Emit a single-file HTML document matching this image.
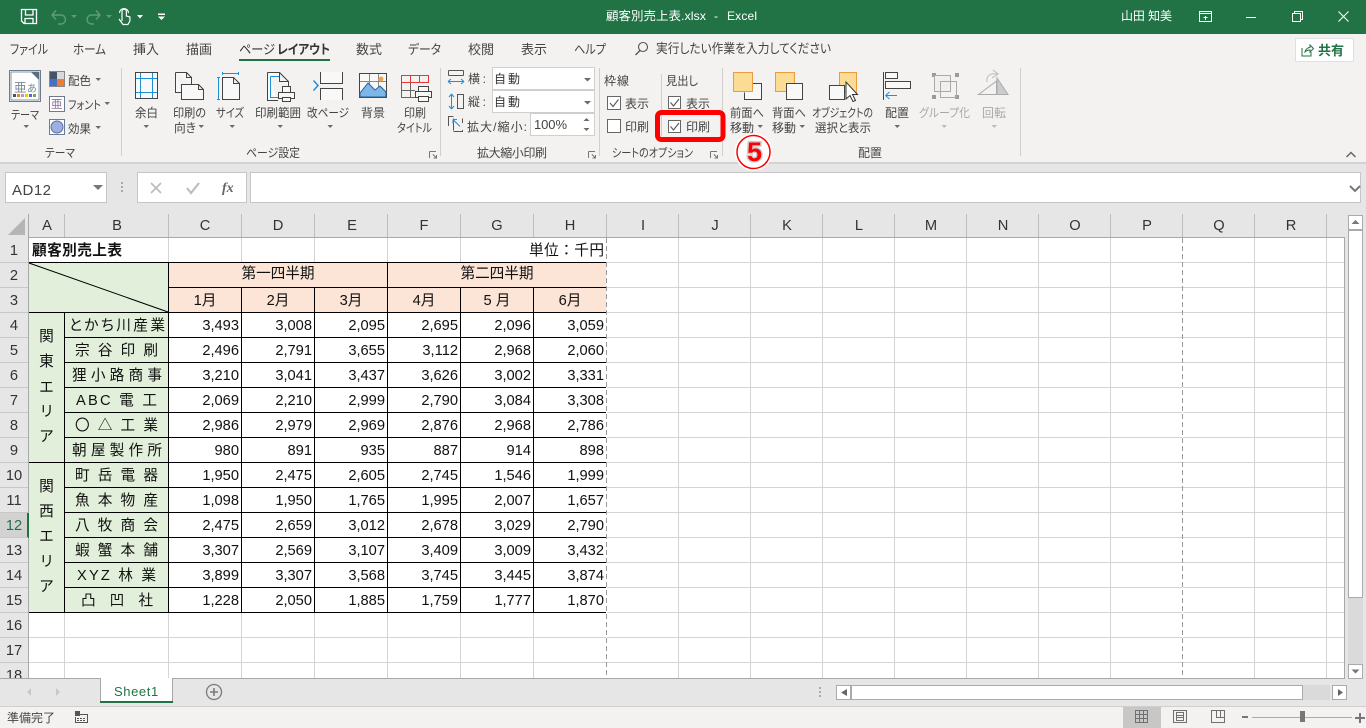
<!DOCTYPE html>
<html lang="ja"><head><meta charset="utf-8"><title>顧客別売上表.xlsx - Excel</title>
<style>
html,body{margin:0;padding:0;width:1366px;height:728px;overflow:hidden;background:#fff}
svg{display:block}
text{font-family:"Liberation Sans","Noto Sans CJK JP",sans-serif;font-feature-settings:"palt";white-space:pre}
.r{font-size:12px;fill:#444}
.t{font-size:13px;fill:#444}
.w{font-size:12px;fill:#fff}
.m{text-anchor:middle}
.e{text-anchor:end}
.h{font-size:14.67px;fill:#333;text-anchor:middle}
.c{font-size:14.67px;fill:#111}
.n{font-size:14.67px;fill:#111;text-anchor:end}
.d{fill:#6a6a6a}
.g{font-size:12px;fill:#a8a8a8}
</style></head><body>
<svg width="1366" height="728" viewBox="0 0 1366 728" xmlns="http://www.w3.org/2000/svg">
<rect width="1366" height="728" fill="#e6e6e6"/>

<!-- sheet -->
<rect x="29" y="238" width="1315" height="440" fill="#fff"/>
<g shape-rendering="crispEdges">
<rect x="29" y="263" width="139" height="49" fill="#e2efda"/>
<rect x="169" y="263" width="437" height="49" fill="#fce4d6"/>
<rect x="29" y="313" width="139" height="299" fill="#e2efda"/>
<path d="M29 262.5H1344M29 287.5H1344M29 312.5H1344M29 337.5H1344M29 362.5H1344M29 387.5H1344M29 412.5H1344M29 437.5H1344M29 462.5H1344M29 487.5H1344M29 512.5H1344M29 537.5H1344M29 562.5H1344M29 587.5H1344M29 612.5H1344M29 637.5H1344M29 662.5H1344" stroke="#d4d4d4"/>
<path d="M64.5 262V312M64.5 613V678M168.5 238V678M241.5 238V678M314.5 238V678M387.5 238V678M460.5 238V678M533.5 262V678M678.5 238V678M750.5 238V678M822.5 238V678M894.5 238V678M966.5 238V678M1038.5 238V678M1110.5 238V678M1254.5 238V678M1326.5 238V678" stroke="#d4d4d4"/>
<rect x="606" y="238" width="1" height="440" fill="#fff"/>
<rect x="1182" y="238" width="1" height="440" fill="#fff"/>
<path d="M606.5 238V678M1182.5 238V678" stroke="#9a9a9a" stroke-dasharray="5 3"/>
<rect x="29" y="263" width="139" height="49" fill="#e2efda"/>
<rect x="169" y="263" width="437" height="24" fill="#fce4d6"/>
<rect x="169" y="288" width="437" height="24" fill="#fce4d6"/>
<rect x="29" y="313" width="35" height="299" fill="#e2efda"/>
<rect x="65" y="313" width="103" height="299" fill="#e2efda"/>
<rect x="169" y="313" width="437" height="299" fill="#fff"/>
<path d="M28 262.5H606M168 287.5H606M28 312.5H606M64 337.5H606M64 362.5H606M64 387.5H606M64 412.5H606M64 437.5H606M28 462.5H606M64 487.5H606M64 512.5H606M64 537.5H606M64 562.5H606M64 587.5H606M28 612.5H606" stroke="#000"/>
<path d="M64.5 312V612M168.5 262V612M241.5 287V612M314.5 287V612M387.5 262V612M460.5 287V612M533.5 287V612" stroke="#000"/>
</g>
<path d="M29 263L168 312" stroke="#000" fill="none"/>

<!-- sheet text -->
<text x="32" y="255" class="c" style="font-weight:700" textLength="90">顧客別売上表</text>
<text x="529" y="255" class="c" style="font-size:14.67px;font-feature-settings:normal" textLength="75">単位：千円</text>
<text x="278" y="278" class="c m" textLength="73">第一四半期</text>
<text x="497" y="278" class="c m" textLength="73">第二四半期</text>
<text x="205" y="305" class="c m">1月</text><text x="278" y="305" class="c m">2月</text><text x="351" y="305" class="c m">3月</text>
<text x="424" y="305" class="c m">4月</text><text x="497" y="305" class="c m">5 月</text><text x="570" y="305" class="c m">6月</text>

<g class="c">
<text x="46.5" y="341" class="c m">関</text><text x="46.5" y="366" class="c m">東</text><text x="46.5" y="392" class="c m">エ</text><text x="46.5" y="416" class="c m">リ</text><text x="46.5" y="441" class="c m">ア</text>
<text x="46.5" y="491" class="c m">関</text><text x="46.5" y="516" class="c m">西</text><text x="46.5" y="541" class="c m">エ</text><text x="46.5" y="566" class="c m">リ</text><text x="46.5" y="591" class="c m">ア</text>
<text x="69" y="330" class="c" textLength="96">とかち川産業</text>
<text x="75" y="355" class="c" textLength="83">宗谷印刷</text>
<text x="72" y="380" class="c" textLength="90">狸小路商事</text>
<text x="76" y="405" class="c" textLength="81">ABC 電 工</text>
<text x="75" y="430" class="c" textLength="83">〇△工業</text>
<text x="72" y="455" class="c" textLength="90">朝屋製作所</text>
<text x="75" y="480" class="c" textLength="83">町岳電器</text>
<text x="75" y="505" class="c" textLength="83">魚本物産</text>
<text x="75" y="530" class="c" textLength="83">八牧商会</text>
<text x="75" y="555" class="c" textLength="83">蝦蟹本舗</text>
<text x="77" y="580" class="c" textLength="79">XYZ 林 業</text>
<text x="81" y="605" class="c" textLength="72">凸凹社</text>
</g>

<text class="n" x="239" y="330">3,493</text><text class="n" x="312" y="330">3,008</text><text class="n" x="385" y="330">2,095</text><text class="n" x="458" y="330">2,695</text><text class="n" x="531" y="330">2,096</text><text class="n" x="604" y="330">3,059</text>
<text class="n" x="239" y="355">2,496</text><text class="n" x="312" y="355">2,791</text><text class="n" x="385" y="355">3,655</text><text class="n" x="458" y="355">3,112</text><text class="n" x="531" y="355">2,968</text><text class="n" x="604" y="355">2,060</text>
<text class="n" x="239" y="380">3,210</text><text class="n" x="312" y="380">3,041</text><text class="n" x="385" y="380">3,437</text><text class="n" x="458" y="380">3,626</text><text class="n" x="531" y="380">3,002</text><text class="n" x="604" y="380">3,331</text>
<text class="n" x="239" y="405">2,069</text><text class="n" x="312" y="405">2,210</text><text class="n" x="385" y="405">2,999</text><text class="n" x="458" y="405">2,790</text><text class="n" x="531" y="405">3,084</text><text class="n" x="604" y="405">3,308</text>
<text class="n" x="239" y="430">2,986</text><text class="n" x="312" y="430">2,979</text><text class="n" x="385" y="430">2,969</text><text class="n" x="458" y="430">2,876</text><text class="n" x="531" y="430">2,968</text><text class="n" x="604" y="430">2,786</text>
<text class="n" x="239" y="455">980</text><text class="n" x="312" y="455">891</text><text class="n" x="385" y="455">935</text><text class="n" x="458" y="455">887</text><text class="n" x="531" y="455">914</text><text class="n" x="604" y="455">898</text>
<text class="n" x="239" y="480">1,950</text><text class="n" x="312" y="480">2,475</text><text class="n" x="385" y="480">2,605</text><text class="n" x="458" y="480">2,745</text><text class="n" x="531" y="480">1,546</text><text class="n" x="604" y="480">1,999</text>
<text class="n" x="239" y="505">1,098</text><text class="n" x="312" y="505">1,950</text><text class="n" x="385" y="505">1,765</text><text class="n" x="458" y="505">1,995</text><text class="n" x="531" y="505">2,007</text><text class="n" x="604" y="505">1,657</text>
<text class="n" x="239" y="530">2,475</text><text class="n" x="312" y="530">2,659</text><text class="n" x="385" y="530">3,012</text><text class="n" x="458" y="530">2,678</text><text class="n" x="531" y="530">3,029</text><text class="n" x="604" y="530">2,790</text>
<text class="n" x="239" y="555">3,307</text><text class="n" x="312" y="555">2,569</text><text class="n" x="385" y="555">3,107</text><text class="n" x="458" y="555">3,409</text><text class="n" x="531" y="555">3,009</text><text class="n" x="604" y="555">3,432</text>
<text class="n" x="239" y="580">3,899</text><text class="n" x="312" y="580">3,307</text><text class="n" x="385" y="580">3,568</text><text class="n" x="458" y="580">3,745</text><text class="n" x="531" y="580">3,445</text><text class="n" x="604" y="580">3,874</text>
<text class="n" x="239" y="605">1,228</text><text class="n" x="312" y="605">2,050</text><text class="n" x="385" y="605">1,885</text><text class="n" x="458" y="605">1,759</text><text class="n" x="531" y="605">1,777</text><text class="n" x="604" y="605">1,870</text>

<!-- headers -->
<g shape-rendering="crispEdges">
<rect x="0" y="513" width="28" height="25" fill="#d2d2d2"/>
<rect x="27" y="513" width="2" height="25" fill="#217346"/>
<path d="M0 262.5H28M0 287.5H28M0 312.5H28M0 337.5H28M0 362.5H28M0 387.5H28M0 412.5H28M0 437.5H28M0 462.5H28M0 487.5H28M0 512.5H28M0 537.5H28M0 562.5H28M0 587.5H28M0 612.5H28M0 637.5H28M0 662.5H28" stroke="#c8c8c8"/>
<path d="M28.5 214V513M28.5 538V678" stroke="#a8a8a8"/>
<path d="M28 237.5H1344.5V678M28 678.5H1345" stroke="#a8a8a8" fill="none"/>
<path d="M64.5 214V237M168.5 214V237M241.5 214V237M314.5 214V237M387.5 214V237M460.5 214V237M533.5 214V237M606.5 214V237M678.5 214V237M750.5 214V237M822.5 214V237M894.5 214V237M966.5 214V237M1038.5 214V237M1110.5 214V237M1182.5 214V237M1254.5 214V237M1326.5 214V237" stroke="#bdbdbd"/>
</g>
<path d="M25 218V235H8Z" fill="#b5b5b5"/>
<text class="h" x="47" y="230">A</text><text class="h" x="117" y="230">B</text><text class="h" x="205" y="230">C</text><text class="h" x="278" y="230">D</text><text class="h" x="352" y="230">E</text><text class="h" x="424" y="230">F</text><text class="h" x="497" y="230">G</text><text class="h" x="570" y="230">H</text><text class="h" x="643" y="230">I</text><text class="h" x="715" y="230">J</text><text class="h" x="787" y="230">K</text><text class="h" x="859" y="230">L</text><text class="h" x="931" y="230">M</text><text class="h" x="1003" y="230">N</text><text class="h" x="1075" y="230">O</text><text class="h" x="1147" y="230">P</text><text class="h" x="1219" y="230">Q</text><text class="h" x="1291" y="230">R</text>
<text class="h" x="14" y="255">1</text><text class="h" x="14" y="280">2</text><text class="h" x="14" y="305">3</text><text class="h" x="14" y="330">4</text><text class="h" x="14" y="355">5</text><text class="h" x="14" y="380">6</text><text class="h" x="14" y="405">7</text><text class="h" x="14" y="430">8</text><text class="h" x="14" y="455">9</text><text class="h" x="14" y="480">10</text><text class="h" x="14" y="505">11</text><text class="h" x="14" y="530" style="fill:#217346">12</text><text class="h" x="14" y="555">13</text><text class="h" x="14" y="580">14</text><text class="h" x="14" y="605">15</text><text class="h" x="14" y="630">16</text><text class="h" x="14" y="655">17</text><text class="h" x="14" y="680">18</text>

<!-- bottom bars -->
<g shape-rendering="crispEdges">
<rect x="0" y="678" width="1366" height="29" fill="#e6e6e6"/>
<path d="M0 678.5H100M172 678.5H1345" stroke="#a8a8a8"/>
<rect x="0" y="706" width="1366" height="1" fill="#cfcfcf"/>
<rect x="0" y="707" width="1366" height="21" fill="#f3f2f1"/>
<rect x="100" y="678" width="73" height="25" fill="#fff"/>
<path d="M100.5 678V703M172.5 678V703" stroke="#a8a8a8"/>
<rect x="100" y="701" width="73" height="2" fill="#217346"/>
</g>
<path d="M31 688L27 692L31 696Z" fill="#c8c8c8"/><path d="M56 688L60 692L56 696Z" fill="#c8c8c8"/>
<text x="114" y="696" style="font-size:13px;fill:#217346;letter-spacing:.6px">Sheet1</text>
<circle cx="214" cy="692" r="7.5" fill="none" stroke="#7a7a7a" stroke-width="1.3"/><path d="M210 692H218M214 688V696" stroke="#7a7a7a" stroke-width="1.6"/>
<g fill="#aaa"><rect x="819" y="687" width="2" height="2"/><rect x="819" y="691" width="2" height="2"/><rect x="819" y="695" width="2" height="2"/></g>
<g shape-rendering="crispEdges">
<rect x="851" y="685" width="479" height="15" fill="#dadada"/>
<rect x="836.5" y="685.5" width="14" height="14" fill="#fff" stroke="#aaa"/>
<rect x="851.5" y="685.5" width="451" height="14" fill="#fff" stroke="#aaa"/>
<rect x="1332.5" y="685.5" width="14" height="14" fill="#fff" stroke="#aaa"/>
<rect x="1348" y="230" width="15" height="434" fill="#dadada"/>
<rect x="1348.5" y="215.5" width="14" height="14" fill="#fff" stroke="#aaa"/>
<rect x="1348.5" y="230.5" width="14" height="367" fill="#fff" stroke="#aaa"/>
<rect x="1348.5" y="664.5" width="14" height="14" fill="#fff" stroke="#aaa"/>
</g>
<path d="M847 689L841 692.5L847 696Z" fill="#666"/><path d="M1338 689L1343 692.5L1338 696Z" fill="#666"/>
<path d="M1355.5 220L1359.5 224H1351.5Z" fill="#777"/><path d="M1351.5 669.5H1359.5L1355.5 673.5Z" fill="#777"/>

<text x="7" y="722" class="r" textLength="48">準備完了</text>
<g fill="#555" shape-rendering="crispEdges"><rect x="75" y="711" width="5" height="5"/><path d="M80 714h8v9h-13v-6h1v5h11v-7h-7z"/><path d="M77 718h2v1h-2zM80 718h2v1h-2zM83 718h2v1h-2zM77 720h2v1h-2zM80 720h2v1h-2zM83 720h2v1h-2z"/></g>
<g shape-rendering="crispEdges" fill="none" stroke="#707070">
<rect x="1123" y="707" width="38" height="21" fill="#c8c7c6" stroke="none"/>
<path d="M1135.5 710.5h12v12h-12zM1139.5 710.5v12M1143.5 710.5v12M1135.5 714.5h12M1135.5 718.5h12"/>
<path d="M1173.5 710.5h13v12h-13zM1176.5 712.5h7v8h-7zM1177 715.5h6M1177 717.5h6"/>
<path d="M1211.5 710.5h13v12h-13zM1216.5 710.5v7h8M1220.5 710.5v7"/>
</g>
<g shape-rendering="crispEdges">
<rect x="1242" y="716" width="6" height="2" fill="#777"/>
<rect x="1252" y="717" width="100" height="1" fill="#aaa"/>
<rect x="1300" y="711" width="5" height="11" fill="#777"/>
<path d="M1355 717h4v-4h2v4h4v2h-4v4h-2v-4h-4z" fill="#777"/>
</g>

<!-- formula bar -->
<rect x="0" y="162" width="1366" height="52" fill="#e6e6e6"/>
<rect x="0" y="162" width="1366" height="2" fill="#d2d2d2"/>
<g shape-rendering="crispEdges" stroke="#c6c6c6" fill="#fff">
<rect x="5.5" y="172.5" width="101" height="30"/>
<rect x="137.5" y="172.5" width="109" height="30"/>
<rect x="250.5" y="172.5" width="1110" height="30"/>
</g>
<text x="12" y="195" style="font-size:15px;fill:#444;letter-spacing:.5px">AD12</text>
<path d="M93 185H103L98 190Z" fill="#777"/>
<g fill="#aaa"><rect x="121" y="182" width="2" height="2"/><rect x="121" y="186" width="2" height="2"/><rect x="121" y="190" width="2" height="2"/></g>
<path d="M151 183L161 193M161 183L151 193" stroke="#bdbdbd" stroke-width="1.8" fill="none"/>
<path d="M187 188L191 193L199 183" stroke="#bdbdbd" stroke-width="2.2" fill="none"/>
<text x="222" y="192" style="font-family:'Liberation Serif',serif;font-style:italic;font-weight:700;font-size:14px;fill:#666">fx</text>
<path d="M1350 186L1355 191L1360 186" stroke="#777" stroke-width="2" fill="none"/>

<!-- ribbon -->
<rect x="0" y="34" width="1366" height="128" fill="#f3f2f1"/>
<rect x="0" y="0" width="1366" height="34" fill="#217346"/>

<!-- QAT -->
<g fill="none" stroke="#fff" stroke-width="1.3">
<path d="M21.5 9.5H36.5V23.5H24L21.5 21Z"/><path d="M25.5 9.5V15H33V9.5M25 23.5V18.5H33V23.5"/>
<path d="M122 21V11.5a2.2 2.2 0 0 1 4.4 0V16l3.5 1V21l-2 3.5H123L119 19" stroke-width="1.2"/><path d="M119.5 13a4.5 4.5 0 0 1 9 0" stroke-width="1.1"/>
</g>
<g fill="none" stroke="#5f9a7c" stroke-width="1.4">
<path d="M56 10.500L52 15L56 19.500M52.500 15H61a4.500 4.500 0 0 1 0 9H58"/>
<path d="M96 10.500L100 15L96 19.500M99.500 15H91.500a4.500 4.500 0 0 0 0 9H94"/>
</g>
<path d="M71 15H77L74 18Z" fill="#5f9a7c"/><path d="M106 15H112L109 18Z" fill="#5f9a7c"/>
<path d="M137 15H143L140 18.500Z" fill="#fff"/>
<path d="M158 13.500H165V15H158ZM158 16.500H165L161.500 20Z" fill="#fff"/>

<!-- title -->
<text x="606" y="20" class="w" textLength="100" lengthAdjust="spacingAndGlyphs">顧客別売上表.xlsx</text>
<text x="714" y="20" class="w">-</text>
<text x="727" y="20" class="w" textLength="30">Excel</text>
<text x="1121" y="20" class="w" textLength="51">山田 知美</text>
<g fill="none" stroke="#fff" stroke-width="1" shape-rendering="crispEdges">
<path d="M1199.500 11.500H1211.500V21.500H1199.500ZM1199.500 13.500H1211.500"/>
<path d="M1205.500 20V16M1203.500 17.500H1207.500"/>
<path d="M1292 17.500H1302" style="display:none"/>
<path d="M1246 17.500H1256"/>
<path d="M1292.500 13.500H1300.500V21.500H1292.500ZM1294.500 13.500V11.500H1302.500V19.500H1300.500"/>
</g>
<path d="M1338.500 11.500L1348.500 21.500M1348.500 11.500L1338.500 21.500" stroke="#fff" stroke-width="1.1"/>

<!-- tabs -->
<text x="10" y="54" class="t" textLength="38" lengthAdjust="spacingAndGlyphs">ファイル</text>
<text x="73" y="54" class="t" textLength="33" lengthAdjust="spacingAndGlyphs">ホーム</text>
<text x="133" y="54" class="t" textLength="26" lengthAdjust="spacingAndGlyphs">挿入</text>
<text x="186" y="54" class="t" textLength="26" lengthAdjust="spacingAndGlyphs">描画</text>
<text x="239" y="54" class="t" style="fill:#333" textLength="36" lengthAdjust="spacingAndGlyphs">ページ</text>
<text x="277" y="54" class="t" style="font-weight:700;fill:#333" textLength="53" lengthAdjust="spacingAndGlyphs">レイアウト</text>
<rect x="239" y="59" width="91" height="2" fill="#217346"/>
<text x="356" y="54" class="t" textLength="26" lengthAdjust="spacingAndGlyphs">数式</text>
<text x="408" y="54" class="t" textLength="33" lengthAdjust="spacingAndGlyphs">データ</text>
<text x="468" y="54" class="t" textLength="26" lengthAdjust="spacingAndGlyphs">校閲</text>
<text x="521" y="54" class="t" textLength="26" lengthAdjust="spacingAndGlyphs">表示</text>
<text x="574" y="54" class="t" textLength="32" lengthAdjust="spacingAndGlyphs">ヘルプ</text>
<circle cx="643" cy="47" r="4.500" fill="none" stroke="#555" stroke-width="1.1"/><path d="M640 50.500L635.500 55" stroke="#555" stroke-width="1.3"/>
<text x="656" y="53" class="t" textLength="175" lengthAdjust="spacingAndGlyphs">実行したい作業を入力してください</text>
<rect x="1295.500" y="38.500" width="58" height="23" fill="#fff" stroke="#e0e0e0" rx="1"/>
<path d="M1302 48V56H1311V52M1305 52c.500-3 3-4.500 5-4.500V45l3.500 3.500L1310 52V50c-2 0-3.500.500-5 2z" fill="none" stroke="#217346"/>
<text x="1318" y="55" style="font-size:13px;font-weight:700;fill:#217346">共有</text>

<!-- separators -->
<g fill="#d0cfce" shape-rendering="crispEdges">
<rect x="121" y="68" width="1" height="88"/><rect x="440" y="68" width="1" height="88"/><rect x="599" y="68" width="1" height="88"/><rect x="661" y="74" width="1" height="62"/><rect x="722" y="68" width="1" height="88"/><rect x="1020" y="68" width="1" height="88"/>
</g>

<!-- theme group -->
<rect x="9.500" y="70.500" width="31" height="31" fill="#fff" stroke="#6d7b8f"/>
<rect x="11" y="72" width="28" height="28" fill="none" stroke="#6d7b8f" stroke-width=".8"/>
<path d="M31 72H39V80Z" fill="#5b6b80"/>
<text x="14" y="92" style="font-size:12.500px;fill:#7b8794">亜</text><text x="27" y="92" style="font-size:10px;fill:#7b8794">あ</text>
<g shape-rendering="crispEdges"><rect x="13" y="94" width="3" height="3" fill="#44546a"/><rect x="17" y="94" width="3" height="3" fill="#ed7d31"/><rect x="21" y="94" width="3" height="3" fill="#a5a5a5"/><rect x="25" y="94" width="3" height="3" fill="#ffc000"/><rect x="29" y="94" width="3" height="3" fill="#4472c4"/><rect x="33" y="94" width="3" height="3" fill="#70ad47"/></g>
<text x="11" y="119" class="r" textLength="28" lengthAdjust="spacingAndGlyphs">テーマ</text><path d="M23.500 125H29L26.200 128Z" class="d"/>
<g shape-rendering="crispEdges">
<rect x="49" y="71" width="16" height="16" fill="#888"/><rect x="50" y="72" width="7" height="7" fill="#44546a"/><rect x="57" y="72" width="7" height="7" fill="#d9d9d9"/><rect x="50" y="79" width="7" height="7" fill="#4472c4"/><rect x="57" y="79" width="7" height="7" fill="#ed7d31"/>
<rect x="49.500" y="96.500" width="15" height="15" fill="#fff" stroke="#6d7b8f"/>
<rect x="49.500" y="119.500" width="15" height="15" fill="#fff" stroke="#6d7b8f"/>
</g>
<text x="51" y="108" style="font-size:11.500px;fill:#8a6f9a">亜</text>
<circle cx="57" cy="127" r="6" fill="#9db0dd" stroke="#4f6fb8"/>
<text x="68" y="85" class="r" textLength="23" lengthAdjust="spacingAndGlyphs">配色</text><path d="M95.500 78H101L98.200 81Z" class="d"/>
<text x="68" y="109" class="r" textLength="33" lengthAdjust="spacingAndGlyphs">フォント</text><path d="M104.500 102H110L107.200 105Z" class="d"/>
<text x="68" y="133" class="r" textLength="23" lengthAdjust="spacingAndGlyphs">効果</text><path d="M95.500 126H101L98.200 129Z" class="d"/>
<text x="45" y="157" class="r" textLength="30" lengthAdjust="spacingAndGlyphs">テーマ</text>

<!-- page setup -->
<g fill="none" stroke="#444" shape-rendering="crispEdges">
<rect x="135.500" y="72.500" width="22" height="26" fill="#f8f8f8"/>
<path d="M140.500 73V98M152.500 73V98M136 78.500H157M136 92.500H157" stroke="#1f8fd6"/>
<path d="M175.500 72.500H186.500L191.500 77.500V84M186.500 72.500V77.500H191.500M175.500 72.500V92.500H181" fill="#f8f8f8"/>
<path d="M181.500 84.500H198.500L203.500 89.500V99.500H181.500ZM198.500 84.500V89.500H203.500" fill="#f8f8f8"/>
<path d="M222.500 77.500H233.500L239.500 83.500V99.500H222.500ZM233.500 77.500V83.500H239.500" fill="#f8f8f8"/>
<path d="M222 73.500H239M222.500 72V75M238.500 72V75M218.500 78V99M217 77.500H220M217 99.500H220" stroke="#1f8fd6"/>
<path d="M267.500 72.500H279.500L288.500 81.500V86M279.500 72.500V81.500H288.500M267.500 72.500V100.500H278" fill="#f8f8f8"/>
<path d="M270.500 76.500H279M270.500 76.500V97.500H278" stroke="#1f8fd6"/>
<rect x="282.500" y="86.500" width="8" height="6" fill="#f8f8f8"/><rect x="278.500" y="92.500" width="16" height="6" fill="#f8f8f8"/><rect x="282.500" y="97.500" width="8" height="4" fill="#f8f8f8"/>
<path d="M320.500 72V83.500H342.500V72M320.500 100V88.500H342.500V100" fill="#f8f8f8"/>
<path d="M313.500 80.500L318 85.500L313.500 90.500" stroke="#1f8fd6" stroke-width="1.500" shape-rendering="auto"/>
<rect x="359.500" y="73.500" width="27" height="24" fill="#f8f8f8"/>
<path d="M369.500 74V90M378.500 74V90M360 81.500H386" stroke="#888"/>
</g>
<path d="M360 93L368 83L375 90L380 86L386 92V97H360Z" fill="#7db6e8" stroke="#2c5f8e"/>
<circle cx="381" cy="79" r="2.500" fill="#f2a54a"/>
<g fill="none" shape-rendering="crispEdges">
<path d="M401.500 75.500H428.500V82.500H401.500ZM410.500 75.500V82.500M419.500 75.500V82.500" stroke="#e33"/>
<path d="M401.500 82.500V97.500H415M401.500 90.500H415M410.500 83V97" stroke="#666"/>
<rect x="418.500" y="86.500" width="10" height="5" fill="#f8f8f8" stroke="#444"/><rect x="415.500" y="91.500" width="16" height="6" fill="#f8f8f8" stroke="#444"/><rect x="418.500" y="96.500" width="10" height="5" fill="#f8f8f8" stroke="#444"/>
</g>
<text x="135" y="117" class="r" textLength="23" lengthAdjust="spacingAndGlyphs">余白</text><path d="M143.500 125H149L146.200 128Z" class="d"/>
<text x="173" y="117" class="r" textLength="33" lengthAdjust="spacingAndGlyphs">印刷の</text><text x="174" y="132" class="r" textLength="22" lengthAdjust="spacingAndGlyphs">向き</text><path d="M198.500 125H204L201.200 128Z" class="d"/>
<text x="216" y="117" class="r" textLength="28" lengthAdjust="spacingAndGlyphs">サイズ</text><path d="M229.500 125H235L232.200 128Z" class="d"/>
<text x="255" y="117" class="r" textLength="46" lengthAdjust="spacingAndGlyphs">印刷範囲</text><path d="M277.500 125H283L280.200 128Z" class="d"/>
<text x="307" y="117" class="r" textLength="42" lengthAdjust="spacingAndGlyphs">改ページ</text><path d="M327.500 125H333L330.200 128Z" class="d"/>
<text x="361" y="117" class="r" textLength="24" lengthAdjust="spacingAndGlyphs">背景</text>
<text x="404" y="117" class="r" textLength="22" lengthAdjust="spacingAndGlyphs">印刷</text><text x="397" y="132" class="r" textLength="35" lengthAdjust="spacingAndGlyphs">タイトル</text>
<text x="246" y="157" class="r" textLength="54" lengthAdjust="spacingAndGlyphs">ページ設定</text>
<path d="M429.500 151.500H436M429.500 151.500V158M433 154.500L436.500 158M433.500 158H436.500V155" stroke="#777" fill="none" shape-rendering="crispEdges"/>

<!-- scale group -->
<g fill="none" shape-rendering="crispEdges">
<path d="M448.500 70.500H463.500M448.500 70.500V75.500M463.500 70.500V75.500M448.500 75.500H463.500" stroke="#555"/>
<path d="M448 81.500H464M448 81.500L451 79M448 81.500L451 84M464 81.500L461 79M464 81.500L461 84" stroke="#1f8fd6" shape-rendering="auto"/>
<path d="M457.500 94.500H463.500V108.500H457.500Z" stroke="#555"/>
<path d="M451.500 94V109M451.500 94L449 97M451.500 94L454 97M451.500 109L449 106M451.500 109L454 106" stroke="#1f8fd6" shape-rendering="auto"/>
<path d="M453.500 116.500H448.500V126" stroke="#555"/>
<path d="M453.500 118.500V130.500M462.500 118.500V123M462.500 130V131.500H453.500" stroke="#555"/>
<path d="M453 119.500L460 126.500M453 119.500H457M453 119.500V123.500" stroke="#1f8fd6" shape-rendering="auto"/>
<rect x="492.500" y="67.500" width="102" height="22" fill="#fff" stroke="#cfcfcf"/>
<rect x="492.500" y="90.500" width="102" height="22" fill="#fff" stroke="#cfcfcf"/>
<rect x="530.500" y="113.500" width="64" height="22" fill="#fff" stroke="#cfcfcf"/>
</g>
<text x="468" y="83" class="r" textLength="18">横:</text>
<text x="468" y="106" class="r" textLength="18">縦:</text>
<text x="467" y="131" class="r" textLength="60">拡大/縮小:</text>
<text x="494" y="83" class="r" textLength="26" style="fill:#333">自動</text>
<text x="494" y="106" class="r" textLength="26" style="fill:#333">自動</text>
<text x="534" y="129" class="r" textLength="33" style="font-size:13px">100%</text>
<path d="M584 78H591L587.500 81.500Z" class="d"/><path d="M584 101H591L587.500 104.500Z" class="d"/>
<path d="M586.500 118L589.500 121H583.500Z" class="d"/><path d="M583.500 128H589.500L586.500 131Z" class="d"/>
<text x="477" y="157" class="r" textLength="70">拡大縮小印刷</text>
<path d="M588.500 151.500H595M588.500 151.500V158M592 154.500L595.500 158M592.500 158H595.500V155" stroke="#777" fill="none" shape-rendering="crispEdges"/>

<!-- sheet options -->
<text x="604" y="85" class="r" textLength="25">枠線</text>
<text x="666" y="85" class="r" textLength="32" lengthAdjust="spacingAndGlyphs">見出し</text>
<g fill="#fff" stroke="#666" shape-rendering="crispEdges">
<rect x="607.500" y="96.500" width="13" height="13"/><rect x="607.500" y="119.500" width="13" height="13"/>
<rect x="668.500" y="96.500" width="12" height="12"/><rect x="668.500" y="120.500" width="12" height="12"/>
</g>
<path d="M610 103L613 106.500L618.500 99.500M670.500 102.500L673.500 106L679 99M670.500 126.500L673.500 130L679 123" fill="none" stroke="#555" stroke-width="1.100"/>
<text x="625" y="108" class="r" textLength="24">表示</text><text x="625" y="131" class="r" textLength="24">印刷</text>
<text x="686" y="108" class="r" textLength="24">表示</text><text x="686" y="131" class="r" textLength="24">印刷</text>
<text x="612" y="157" class="r" textLength="81" lengthAdjust="spacingAndGlyphs">シートのオプション</text>
<path d="M710.500 151.500H717M710.500 151.500V158M714 154.500L717.500 158M714.500 158H717.500V155" stroke="#777" fill="none" shape-rendering="crispEdges"/>

<!-- arrange -->
<g shape-rendering="crispEdges">
<path d="M753 83.500H761.500V99.500H744.500V92.500" fill="#f8f8f8" stroke="#444"/>
<rect x="733.500" y="72.500" width="19" height="19" fill="#fbdc94" stroke="#ed9b40"/>
<rect x="775.500" y="72.500" width="19" height="19" fill="#fbdc94" stroke="#ed9b40"/>
<rect x="786.500" y="83.500" width="16" height="16" fill="#f8f8f8" stroke="#444"/>
<rect x="839.500" y="72.500" width="17" height="20" fill="#fbdc94" stroke="#ed9b40"/>
<rect x="829.500" y="85.500" width="15" height="14" fill="#f8f8f8" stroke="#444"/>
<path d="M883.500 72V100" stroke="#444"/>
<rect x="885.500" y="72.500" width="12" height="6" fill="#f8f8f8" stroke="#444"/>
<rect x="885.500" y="81.500" width="25" height="7" fill="#f8f8f8" stroke="#444"/>
<path d="M932 73h4v4h-4zM955 73h4v4h-4zM932 95h4v4h-4zM955 95h4v4h-4z" fill="#9a9a9a"/>
<rect x="934.500" y="75.500" width="16" height="16" fill="#efefef" stroke="#aaa"/>
<rect x="940.500" y="81.500" width="16" height="16" fill="none" stroke="#aaa"/>
</g>
<path d="M846 82V99L850 95.500L853 101.500L855.500 100.500L852.500 94.500H857.500Z" fill="#fff" stroke="#333"/>
<path d="M897 95.500H885.500M885.500 95.500L889.500 92M885.500 95.500L889.500 99" stroke="#1f8fd6" fill="none"/>
<path d="M978.500 94.500L996.500 81V94.500Z" fill="#f3f2f1" stroke="#aaa"/><path d="M997 78L1008 94.500H997Z" fill="#ccc" stroke="#aaa"/>
<path d="M993 70L998 74L992 78M997 74c-6-1-11 1-10 8" fill="none" stroke="#bbb"/>
<text x="730" y="117" class="r" textLength="34" lengthAdjust="spacingAndGlyphs">前面へ</text><text x="730" y="132" class="r" textLength="24" lengthAdjust="spacingAndGlyphs">移動</text><path d="M757.500 125H763L760.200 128Z" class="d"/>
<text x="772" y="117" class="r" textLength="34" lengthAdjust="spacingAndGlyphs">背面へ</text><text x="772" y="132" class="r" textLength="24" lengthAdjust="spacingAndGlyphs">移動</text><path d="M799.500 125H805L802.200 128Z" class="d"/>
<text x="812" y="117" class="r" textLength="61" lengthAdjust="spacingAndGlyphs">オブジェクトの</text><text x="815" y="132" class="r" textLength="56" lengthAdjust="spacingAndGlyphs">選択と表示</text>
<text x="885" y="117" class="r" textLength="24" lengthAdjust="spacingAndGlyphs">配置</text><path d="M894.500 125H900L897.200 128Z" class="d"/>
<text x="919" y="117" class="g" textLength="51" lengthAdjust="spacingAndGlyphs">グループ化</text><path d="M941.500 125H947L944.200 128Z" fill="#bbb"/>
<text x="982" y="117" class="g" textLength="24" lengthAdjust="spacingAndGlyphs">回転</text><path d="M991.500 125H997L994.200 128Z" fill="#bbb"/>
<text x="858" y="157" class="r" textLength="24" lengthAdjust="spacingAndGlyphs">配置</text>
<path d="M1346.500 157L1351 152.500L1355.500 157" fill="none" stroke="#666" stroke-width="1.500"/>

<!-- callouts -->
<rect x="657.500" y="112.500" width="65.500" height="27" rx="4" fill="none" stroke="#f00" stroke-width="5"/>
<circle cx="753.500" cy="152" r="19" fill="#fff" opacity=".92"/>
<circle cx="753.500" cy="152" r="16.500" fill="#fff" stroke="#f00" stroke-width="1.500"/>
<text x="754.500" y="161" text-anchor="middle" style="font-size:27px;font-weight:700;fill:#f00;stroke:#ccc;stroke-width:3px;paint-order:stroke">5</text>
</svg>
</body></html>
